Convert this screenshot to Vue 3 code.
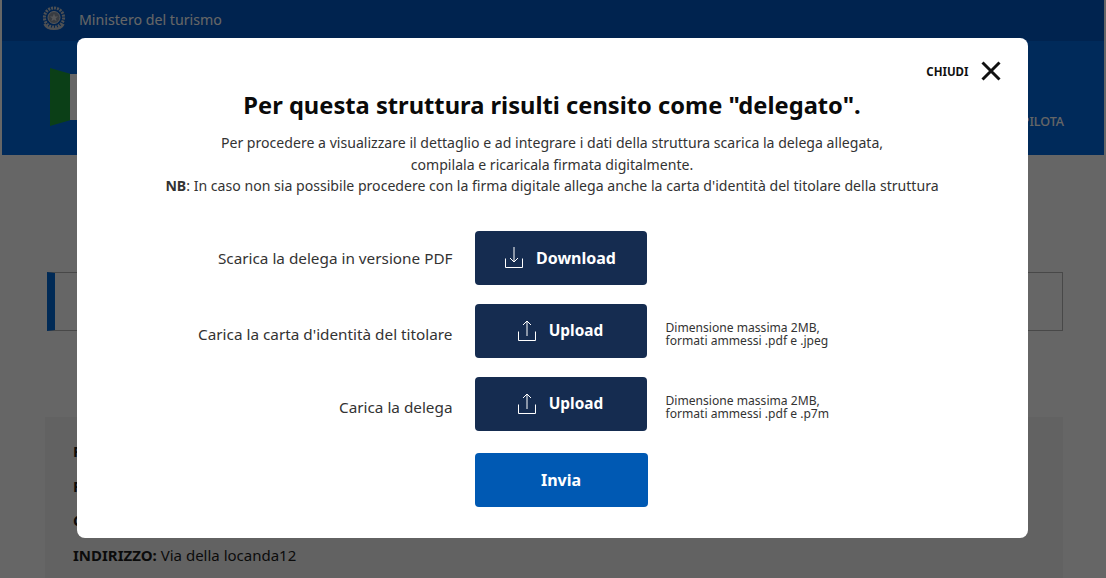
<script setup>
const rows = [
  { label: 'Scarica la delega in versione PDF', action: 'Download', icon: 'down', note: '', low: false },
  { label: "Carica la carta d'identità del titolare", action: 'Upload', icon: 'up', note: 'formati ammessi .pdf e .jpeg', low: true },
  { label: 'Carica la delega', action: 'Upload', icon: 'up', note: 'formati ammessi .pdf e .p7m', low: true },
]
const facts = [
  ['PROVINCIA:', 'Roma'],
  ['PRESSO:', 'Roma'],
  ['COMUNE:', 'Roma'],
  ['INDIRIZZO:', 'Via della locanda12'],
]
</script>

<template>
  <div class="page">
    <div class="slim">
      <svg class="emblem" viewBox="0 0 26 26" aria-hidden="true">
        <circle cx="13" cy="12" r="9.6" fill="none" stroke="#c4c9d0" stroke-width="3" stroke-dasharray="2 1" />
        <circle cx="13" cy="12" r="6" fill="#8d97a6" stroke="#d5d8dd" stroke-width="1" />
        <path d="M13 8l1.1 2.9h3l-2.4 1.9.9 3-2.6-1.8-2.6 1.8.9-3-2.4-1.9h3z" fill="#d5d8dd" />
        <path d="M3.5 18.5c3 6.5 16 6.5 19 0" fill="none" stroke="#c4c9d0" stroke-width="2.4" />
      </svg>
      <span class="ministry">Ministero del turismo</span>
    </div>
    <div class="main-head">
      <div class="flag"><span class="green"></span><span class="white"></span></div>
      <span class="nav">PROGETTO PILOTA</span>
    </div>
    <div class="content">
      <div class="notice"></div>
      <div class="card">
        <p v-for="f in facts" :key="f[0]" class="fact"><b>{{ f[0] }}</b> {{ f[1] }}</p>
      </div>
    </div>

    <div class="overlay">
      <div class="modal">
        <div class="close"><span>CHIUDI</span>
          <svg class="x" viewBox="0 0 20 20" aria-hidden="true"><path d="M1.5 1.5l17 17M18.5 1.5l-17 17" /></svg>
        </div>
        <h1>Per questa struttura risulti censito come "delegato".</h1>
        <p class="intro">
          Per procedere a visualizzare il dettaglio e ad integrare i dati della struttura scarica la delega allegata,<br />
          compilala e ricaricala firmata digitalmente.<br />
          <b>NB</b>: In caso non sia possibile procedere con la firma digitale allega anche la carta d'identità del titolare della struttura
        </p>
        <div class="grid">
          <template v-for="r in rows" :key="r.label + r.action">
            <div class="label" :class="{ low: r.low }">{{ r.label }}</div>
            <button class="btn dark" type="button">
              <svg class="ico" viewBox="0 0 18 21" aria-hidden="true">
                <path d="M.5 11.5v9h17v-9" />
                <path v-if="r.icon === 'down'" d="M9 0v15M5 11l4 4 4-4" />
                <path v-else d="M9 16V1M5 5l4-4 4 4" />
              </svg>
              <span :class="{ tight: r.icon === 'up' }">{{ r.action }}</span>
            </button>
            <div class="note" :class="{ low: r.low }"><template v-if="r.note">Dimensione massima 2MB,<br />{{ r.note }}</template></div>
          </template>
          <div></div>
          <button class="btn blue" type="button">Invia</button>
          <div></div>
        </div>
      </div>
    </div>
  </div>
</template>

<style>
html, body { margin: 0; height: 100%; overflow: hidden; background: #f4f4f4; }
</style>

<style scoped>
.page {
  height: 578px;
  padding: 0 2px;
  box-sizing: border-box;
  background: #fff;
  font-family: "Noto Sans", "Open Sans", sans-serif;
  color: #1c1c1c;
  position: relative;
  overflow: hidden;
}
.slim {
  height: 41px;
  background: #0058c5;
  display: flex;
  align-items: center;
  padding-left: 39px;
  gap: 12px;
}
.emblem { width: 26px; height: 27px; margin-top: -4px; }
.ministry { color: #fff; font-size: 14.2px; margin-top: -3px; }
.main-head {
  height: 114px;
  background: #0069e1;
  display: flex;
  justify-content: flex-end;
  align-items: flex-end;
  padding-right: 40px;
}
.flag { display: flex; align-items: center; margin: 0 auto 29px 48px; }
.green {
  width: 20px; height: 58px;
  background: #1c9f3a;
  clip-path: polygon(0 0, 100% 10%, 100% 90%, 0 100%);
}
.white { width: 40px; height: 46px; background: #fff; }
.nav { color: #fff; font-size: 12.5px; font-weight: 500; line-height: 18px; margin-bottom: 24px; }
.content { padding: 117px 41px 0 45px; background: #fff; height: 423px; box-sizing: border-box; }
.notice {
  height: 59px;
  border: 1px solid #b4b4b4;
  border-left: 8px solid #0069d8;
  box-sizing: border-box;
}
.card {
  margin-top: 86px;
  margin-left: -2px;
  background: #f5f5f5;
  height: 200px;
  padding: 24px 0 0 28px;
}
.fact { margin: 0 0 13.5px; font-size: 15px; line-height: 21px; white-space: nowrap; }

.overlay {
  position: absolute;
  inset: 0;
  background: rgba(0, 0, 0, 0.6);
  display: flex;
  justify-content: center;
  align-items: flex-start;
  padding: 38px 2px 0 0;
  box-sizing: border-box;
}
.modal {
  width: 951px;
  height: 500px;
  background: #fff;
  border-radius: 8px;
  box-sizing: border-box;
  padding: 23px 27px 0 0;
  color: #1c1c1c;
}
.close {
  display: flex;
  justify-content: flex-end;
  align-items: center;
  gap: 12px;
  font-size: 11.5px;
  font-weight: 700;
  color: #111;
  height: 20px;
}
.x { width: 20px; height: 20px; fill: none; stroke: #111; stroke-width: 3; }
h1 {
  margin: 6px 0 0 27px;
  font-size: 23.7px;
  line-height: 36px;
  font-weight: 700;
  color: #0a0a0a;
  text-align: center;
}
.intro {
  margin: 9px 0 0 27px;
  font-size: 14.1px;
  line-height: 21.5px;
  text-align: center;
  color: #333;
}
.grid {
  display: grid;
  grid-template-columns: 376px 172px 1fr;
  column-gap: 22px;
  row-gap: 18.5px;
  margin-top: 34px;
  align-items: center;
}
.label { text-align: right; font-size: 15.3px; color: #333; }
.label.low { padding-top: 7px; }
.btn {
  height: 54.5px;
  width: 172px;
  border: 0;
  border-radius: 4px;
  color: #fff;
  font-family: inherit;
  font-size: 16px;
  font-weight: 700;
  display: flex;
  align-items: center;
  justify-content: center;
  gap: 13px;
}
.tight { font-size: 15.4px; }
.dark { background: #152c50; }
.blue { background: #0059b3; width: 173px; margin-top: 3px; }
.ico { width: 18px; height: 21px; fill: none; stroke: #fff; stroke-width: 1; }
.note { font-size: 12.1px; line-height: 13px; color: #333; margin-left: -3px; white-space: nowrap; }
.note.low { padding-top: 6px; }
</style>
